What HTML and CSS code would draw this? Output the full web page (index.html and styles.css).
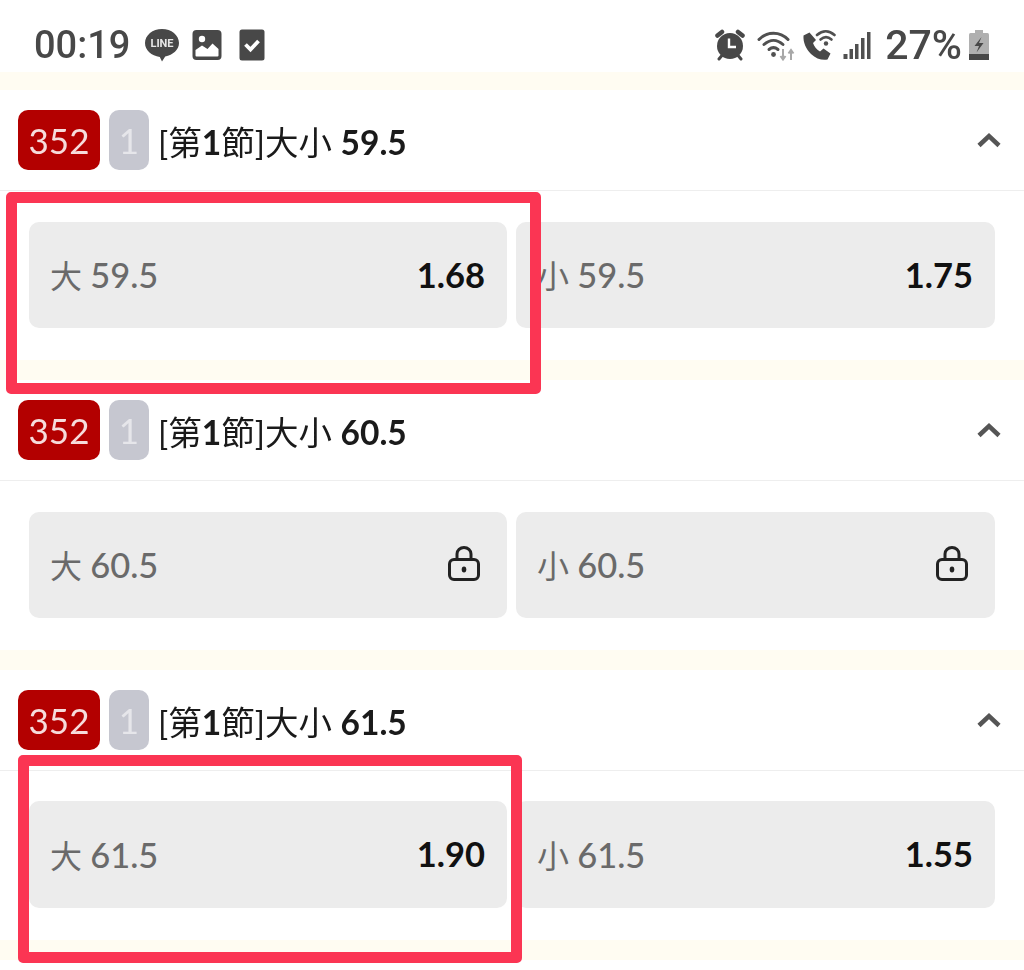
FILE: index.html
```html
<!DOCTYPE html>
<html lang="zh-Hant">
  <head>
    <meta charset="UTF-8" />
    <title>大小</title>
    <link rel="stylesheet" href="styles.css">
  </head>
  <body>
    <div class="phone">
      <div class="status-bar">
        <div class="status-left">
          <span class="clock">00:19</span>
          <svg class="icon-line" width="36" height="36" viewBox="0 0 36 36">
            <path fill="#484848" d="M18 2C8.600 2 1 8.200 1 16c0 7.200 6.400 13 14.800 13.900l2.200 4.600 3.200-4.900C29 28 35 22.500 35 16 35 8.200 27.400 2 18 2z"/>
            <text class="line-word" x="18" y="20" text-anchor="middle">LINE</text>
          </svg>
          <svg class="icon-pic" width="30" height="32" viewBox="0 0 30 32">
            <rect x="0.500" y="1" width="29" height="30" rx="4" fill="#484848"/>
            <circle cx="10" cy="10" r="3.200" fill="#fff"/>
            <path fill="#fff" d="M3.500 26.500v-5.500l6.500-4.500 5.500 3.500 5-5.500 6 5.500v6.500a1 1 0 0 1-1 1h-21a1 1 0 0 1-1-1z"/>
          </svg>
          <svg class="icon-check" width="26" height="32" viewBox="0 0 26 32">
            <rect x="0.500" y="0.500" width="25" height="31" rx="2.500" fill="#484848"/>
            <path fill="none" stroke="#fff" stroke-width="3.800" d="M6.500 15.500l5 5 8-8.500"/>
          </svg>
        </div>
        <div class="status-right">
          <svg class="icon-alarm" width="32" height="32" viewBox="0 0 32 32">
            <circle cx="16" cy="17" r="13" fill="#484848"/>
            <path fill="none" stroke="#fff" stroke-width="2.400" d="M15 9.500v8.500h7"/>
            <path fill="none" stroke="#484848" stroke-width="4.500" stroke-linecap="round" d="M3.500 6.500L8 3M28.500 6.500L24 3"/>
            <path fill="none" stroke="#484848" stroke-width="3" stroke-linecap="round" d="M7.500 27l-2.500 3M24.500 27l2.500 3"/>
          </svg>
          <svg width="38" height="32" viewBox="0 0 38 32">
            <g fill="none" stroke="#505050" stroke-width="3" stroke-linecap="round">
              <path d="M2 10.500C10 2 23 2 31 10.500"/>
              <path d="M7 15.500c6-5.500 13-5.500 19 0"/>
              <path d="M12 20.500c3-2.500 6-2.500 9 0"/>
            </g>
            <circle cx="16.500" cy="25.500" r="2.400" fill="#505050"/>
            <path fill="none" stroke="#a8a8a8" stroke-width="2" d="M26 20v10M23.500 27L26 30.500l2.500-3.500M34 31V21M31.500 24.500L34 21l2.500 3.500"/>
          </svg>
          <svg width="34" height="32" viewBox="0 0 34 32">
            <path fill="#484848" d="M7.500 3.500L1.500 6.500C1 13.500 4 20 9 25s11.500 6.500 16.500 5.500l3-6-7-5-3.500 3c-3-1.500-6-5-7-8.500l3-3z"/>
            <g fill="none" stroke="#505050" stroke-width="2.600" stroke-linecap="round">
              <path d="M15 6c5.500-5 12-5 17.500 0"/>
              <path d="M18.500 10.500c3.500-3 7.500-3 11 0"/>
            </g>
            <circle cx="24" cy="14.500" r="2.200" fill="#505050"/>
          </svg>
          <svg width="28" height="30" viewBox="0 0 28 30">
            <rect x="0.500" y="24" width="4" height="5" fill="#505050"/>
            <rect x="6.500" y="19" width="3.500" height="10" fill="#505050"/>
            <rect x="12" y="14" width="3.500" height="15" fill="#505050"/>
            <rect x="18" y="8" width="3.500" height="21" fill="#505050"/>
            <rect x="24" y="2" width="3.500" height="27" fill="#505050"/>
          </svg>
          <span class="battery-text">27%</span>
          <svg width="22" height="32" viewBox="0 0 22 32">
            <rect x="7" y="1" width="8" height="4" fill="#b0b0b0"/>
            <rect x="1" y="4" width="20" height="27" rx="1.500" fill="#b0b0b0"/>
            <rect x="1" y="25" width="20" height="6" fill="#484848"/>
            <path fill="#484848" d="M13.500 8l-7 9h4.500l-2.500 6.500 7-9.500h-4.500z"/>
          </svg>
        </div>
      </div>

      <section class="market">
        <div class="market-head">
          <span class="badge badge-red">352</span>
          <span class="badge badge-grey">1</span>
          <h2 class="market-title">[第<b>1</b>節]大小 <b>59.5</b></h2>
          <svg class="chevron" width="24" height="16" viewBox="0 0 24 16">
            <path fill="none" stroke="#555" stroke-width="4.500" d="M2 13.500l10-9.500 10 9.500"/>
          </svg>
        </div>
        <div class="market-body">
          <div class="option">
            <span class="option-name">大 <span class="num">59.5</span></span>
            <span class="odds">1.68</span>
            <div class="highlight highlight-one"></div>
          </div>
          <div class="option">
            <span class="option-name">小 <span class="num">59.5</span></span>
            <span class="odds">1.75</span>
          </div>
        </div>
      </section>

      <section class="market">
        <div class="market-head">
          <span class="badge badge-red">352</span>
          <span class="badge badge-grey">1</span>
          <h2 class="market-title">[第<b>1</b>節]大小 <b>60.5</b></h2>
          <svg class="chevron" width="24" height="16" viewBox="0 0 24 16">
            <path fill="none" stroke="#555" stroke-width="4.500" d="M2 13.500l10-9.500 10 9.500"/>
          </svg>
        </div>
        <div class="market-body">
          <div class="option">
            <span class="option-name">大 <span class="num">60.5</span></span>
            <svg class="lock" width="34" height="36" viewBox="0 0 34 36">
              <path fill="none" stroke="#222" stroke-width="3" d="M10 13V8a7 6.500 0 0 1 14 0v5"/>
              <rect x="2.500" y="13.500" width="29" height="20" rx="4.500" fill="none" stroke="#222" stroke-width="3"/>
              <ellipse cx="17" cy="23.500" rx="2.300" ry="3" fill="#222"/>
            </svg>
          </div>
          <div class="option">
            <span class="option-name">小 <span class="num">60.5</span></span>
            <svg class="lock" width="34" height="36" viewBox="0 0 34 36">
              <path fill="none" stroke="#222" stroke-width="3" d="M10 13V8a7 6.500 0 0 1 14 0v5"/>
              <rect x="2.500" y="13.500" width="29" height="20" rx="4.500" fill="none" stroke="#222" stroke-width="3"/>
              <ellipse cx="17" cy="23.500" rx="2.300" ry="3" fill="#222"/>
            </svg>
          </div>
        </div>
      </section>

      <section class="market">
        <div class="market-head">
          <span class="badge badge-red">352</span>
          <span class="badge badge-grey">1</span>
          <h2 class="market-title">[第<b>1</b>節]大小 <b>61.5</b></h2>
          <svg class="chevron" width="24" height="16" viewBox="0 0 24 16">
            <path fill="none" stroke="#555" stroke-width="4.500" d="M2 13.500l10-9.500 10 9.500"/>
          </svg>
        </div>
        <div class="market-body market-body-last">
          <div class="option">
            <span class="option-name">大 <span class="num">61.5</span></span>
            <span class="odds">1.90</span>
            <div class="highlight highlight-two"></div>
          </div>
          <div class="option">
            <span class="option-name">小 <span class="num">61.5</span></span>
            <span class="odds">1.55</span>
          </div>
        </div>
      </section>
      <div class="band"></div>
    </div>
  </body>
</html>
```

FILE: styles.css
```css
body {
  margin: 0;
  padding: 0;
  background-color: #fff;
  font-family: "Lato", "Noto Sans CJK TC", sans-serif;
  color: #111;
  overflow: hidden;
}
.phone {
  width: 1024px;
  height: 970px;
  overflow: hidden;
  filter: blur(0.4px);
}
.status-bar {
  height: 72px;
  display: flex;
  align-items: center;
  justify-content: space-between;
  padding: 18px 34px 0 34px;
  box-sizing: border-box;
  color: #484848;
  font-family: "Roboto", sans-serif;
  font-weight: 500;
  font-size: 38px;
  filter: blur(0.6px);
}
.status-left {
  display: flex;
  align-items: center;
}
.clock {
  margin-right: 14px;
}
.icon-pic {
  margin-left: 12px;
}
.icon-check {
  margin-left: 17px;
}
.line-word {
  font-family: "Roboto", sans-serif;
  font-size: 11px;
  font-weight: 700;
  fill: #e8e8e8;
}
.status-right {
  display: flex;
  align-items: center;
  gap: 7px;
}
.icon-alarm {
  margin-right: 4px;
}
.battery-text {
  margin-left: 7px;
  margin-right: -1px;
  font-size: 41px;
}
.market {
  border-top: 18px solid #fffcf2;
  height: 270px;
}
.market + .market {
  border-top-width: 20px;
}
.band {
  height: 20px;
  background-color: #fffcf2;
}
.market-head {
  height: 100px;
  display: flex;
  align-items: center;
  padding: 0 23px 0 18px;
  border-bottom: 1px solid #eeeeee;
}
.badge {
  height: 60px;
  border-radius: 10px;
  display: flex;
  align-items: center;
  justify-content: center;
  font-size: 35px;
}
.badge-red {
  width: 82px;
  background-color: #b30000;
  color: #f6dcdc;
}
.badge-grey {
  width: 40px;
  margin-left: 9px;
  background-color: #c6c7d0;
  color: #e6e6ea;
}
.market-title {
  margin: 0 0 0 9px;
  flex-grow: 1;
  font-size: 33.5px;
  font-weight: 400;
  color: #1a1a1a;
}
.market-title b {
  font-weight: 700;
}
.market-body {
  display: grid;
  grid-template-columns: 478px 479px;
  gap: 9px;
  padding: 31px 29px 0 29px;
}
.market-body-last {
  padding-top: 30px;
}
.option {
  position: relative;
  height: 106px;
  background-color: #ececec;
  border-radius: 10px;
  display: flex;
  align-items: center;
  justify-content: space-between;
  padding: 0 22px 2px 21px;
  box-sizing: border-box;
}
.market-body-last .option {
  height: 107px;
}
.option-name {
  font-size: 32px;
  color: #6a6a6a;
}
.num {
  font-size: 34.5px;
  font-weight: 500;
}
.odds {
  font-size: 34.5px;
  font-weight: 700;
  color: #111;
}
.lock {
  margin-right: 4px;
}
.highlight {
  position: absolute;
  z-index: 1;
  border: 11px solid #fb3553;
  border-radius: 5px;
  box-sizing: border-box;
}
.highlight-one {
  left: -23px;
  top: -30px;
  width: 535px;
  height: 202px;
}
.highlight-two {
  left: -11px;
  top: -46px;
  width: 504px;
  height: 208px;
}
```
